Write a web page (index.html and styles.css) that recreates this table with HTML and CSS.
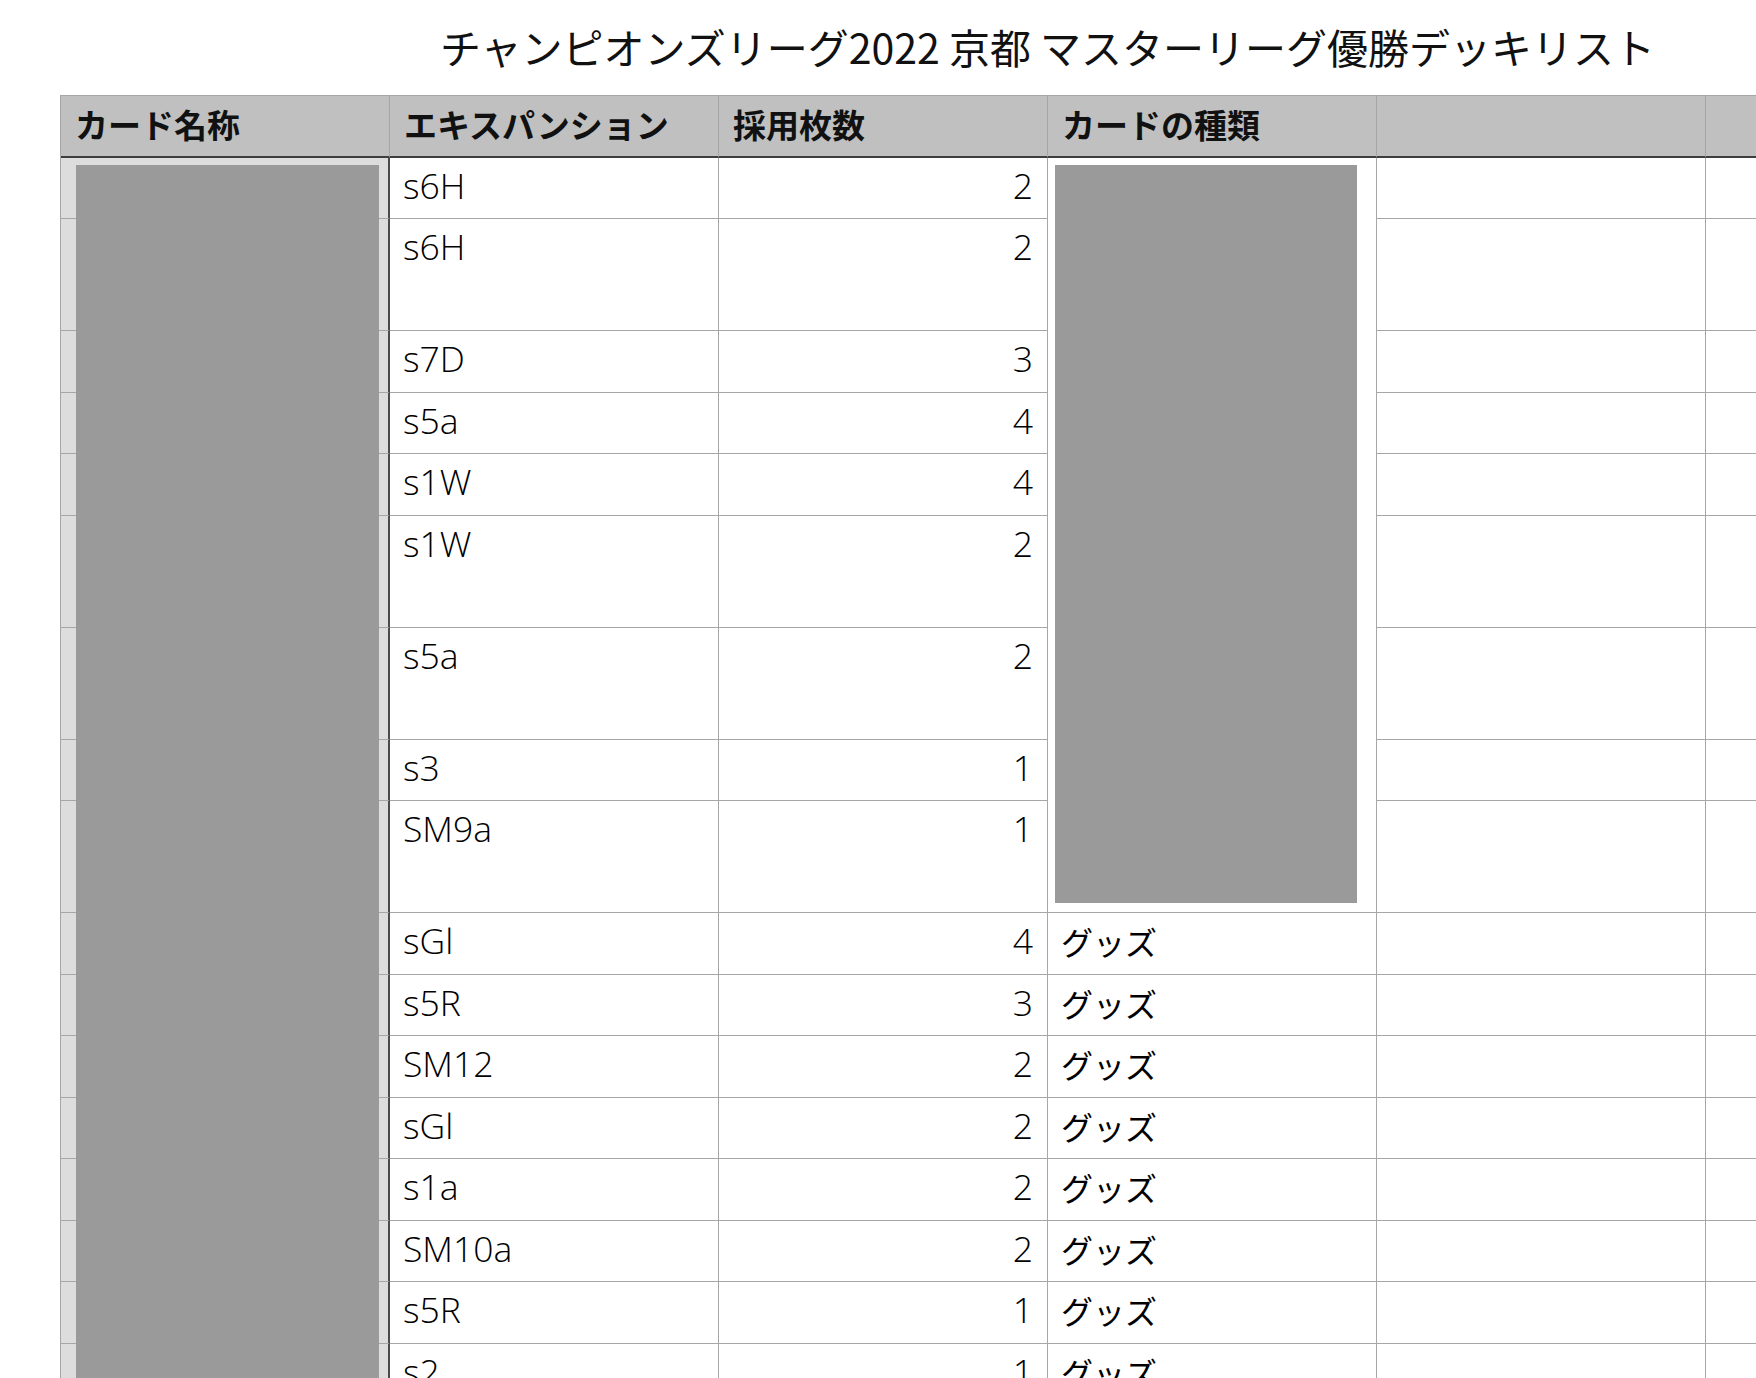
FILE: index.html
```html
<!DOCTYPE html>
<html lang="ja">
<head>
<meta charset="utf-8">
<title>チャンピオンズリーグ2022 京都 マスターリーグ優勝デッキリスト</title>
<link rel="stylesheet" href="styles.css">
</head>
<body>
<div class="sheet">
  <h1 class="title">チャンピオンズリーグ2022 京都 マスターリーグ優勝デッキリスト</h1>
  <div class="table">
    <div class="cell head">カード名称</div>
    <div class="cell head">エキスパンション</div>
    <div class="cell head">採用枚数</div>
    <div class="cell head">カードの種類</div>
    <div class="cell head"></div>
    <div class="cell head"></div>

    <div class="cell c1"></div><div class="cell">s6H</div><div class="cell num">2</div>
    <div class="cell hidden-kind"><div class="redact"></div></div>
    <div class="cell"></div><div class="cell"></div>

    <div class="cell c1"></div><div class="cell">s6H</div><div class="cell num">2</div><div class="cell"></div><div class="cell"></div>
    <div class="cell c1"></div><div class="cell">s7D</div><div class="cell num">3</div><div class="cell"></div><div class="cell"></div>
    <div class="cell c1"></div><div class="cell">s5a</div><div class="cell num">4</div><div class="cell"></div><div class="cell"></div>
    <div class="cell c1"></div><div class="cell">s1W</div><div class="cell num">4</div><div class="cell"></div><div class="cell"></div>
    <div class="cell c1"></div><div class="cell">s1W</div><div class="cell num">2</div><div class="cell"></div><div class="cell"></div>
    <div class="cell c1"></div><div class="cell">s5a</div><div class="cell num">2</div><div class="cell"></div><div class="cell"></div>
    <div class="cell c1"></div><div class="cell">s3</div><div class="cell num">1</div><div class="cell"></div><div class="cell"></div>
    <div class="cell c1"></div><div class="cell">SM9a</div><div class="cell num">1</div><div class="cell"></div><div class="cell"></div>

    <div class="cell c1"></div><div class="cell">sGl</div><div class="cell num">4</div><div class="cell kind">グッズ</div><div class="cell"></div><div class="cell"></div>
    <div class="cell c1"></div><div class="cell">s5R</div><div class="cell num">3</div><div class="cell kind">グッズ</div><div class="cell"></div><div class="cell"></div>
    <div class="cell c1"></div><div class="cell">SM12</div><div class="cell num">2</div><div class="cell kind">グッズ</div><div class="cell"></div><div class="cell"></div>
    <div class="cell c1"></div><div class="cell">sGl</div><div class="cell num">2</div><div class="cell kind">グッズ</div><div class="cell"></div><div class="cell"></div>
    <div class="cell c1"></div><div class="cell">s1a</div><div class="cell num">2</div><div class="cell kind">グッズ</div><div class="cell"></div><div class="cell"></div>
    <div class="cell c1"></div><div class="cell">SM10a</div><div class="cell num">2</div><div class="cell kind">グッズ</div><div class="cell"></div><div class="cell"></div>
    <div class="cell c1"></div><div class="cell">s5R</div><div class="cell num">1</div><div class="cell kind">グッズ</div><div class="cell"></div><div class="cell"></div>
    <div class="cell c1"></div><div class="cell">s2</div><div class="cell num">1</div><div class="cell kind">グッズ</div><div class="cell"></div><div class="cell"></div>

    <div class="name-redact"></div>
  </div>
</div>
</body>
</html>
```

FILE: styles.css
```css
html, body {
  margin: 0;
  padding: 0;
  background: #ffffff;
  overflow: hidden;
}

body {
  font-family: "Open Sans", "Noto Sans CJK JP", "Noto Sans", sans-serif;
  color: #111111;
}

.sheet {
  padding-left: 60px;
  width: 1975px;
}

.title {
  margin: 0;
  height: 95px;
  padding-top: 2px;
  box-sizing: border-box;
  font-family: "Noto Sans CJK JP", sans-serif;
  font-size: 41px;
  font-weight: 400;
  line-height: 88px;
  text-align: center;
  color: #111111;
  white-space: nowrap;
}

.table {
  position: relative;
  display: grid;
  grid-template-columns: repeat(6, 329px);
  grid-template-rows: 62px 61px 112px 61.5px 61.5px 61.5px 112px 112px 61.5px 112px 61.5px 61.5px 61.5px 61.5px 61.5px 61.5px 61.5px 61.5px;
  border-left: 1px solid #a6a6a6;
  border-top: 1px solid #a6a6a6;
  width: 1974px;
}

.cell {
  box-sizing: border-box;
  border-right: 1px solid #a6a6a6;
  border-bottom: 1px solid #a6a6a6;
  padding: 2px 14px 0 13px;
  font-size: 35.5px;
  font-weight: 300;
  line-height: 50px;
  white-space: nowrap;
  overflow: hidden;
  color: #000000;
}

.kind {
  font-family: "Noto Sans CJK JP", sans-serif;
  font-size: 32px;
  font-weight: 400;
  padding-top: 3px;
}

.head {
  background: #bfc0bf;
  font-family: "Noto Sans CJK JP", sans-serif;
  font-size: 33px;
  font-weight: 700;
  border-bottom: 2px solid #3e3e3e;
  display: flex;
  align-items: center;
  padding: 0 14px 4px 14px;
  color: #111111;
}

.c1 {
  background: #dddddd;
  border-right: 2px solid #4a4a4a;
}

.num {
  text-align: right;
}

.hidden-kind {
  grid-column: 4;
  grid-row: 2 / span 9;
  padding: 7px 19px 9px 7px;
  background: #ffffff;
}

.redact {
  width: 100%;
  height: 100%;
  background: #9a9a9a;
}

.name-redact {
  position: absolute;
  left: 15px;
  top: 69px;
  width: 303px;
  bottom: 0;
  background: #9a9a9a;
}
```
